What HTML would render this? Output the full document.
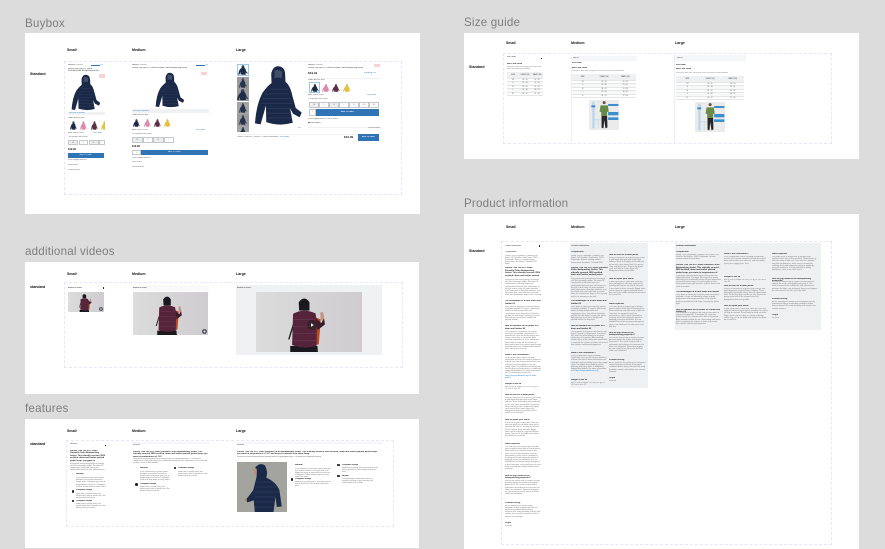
<!DOCTYPE html>
<html lang="en"><head><meta charset="utf-8"><title>Product component overview</title>
<style>
html,body{margin:0;padding:0}
body{width:885px;height:549px;background:#dcdcdc;position:relative;overflow:hidden;font-family:"Liberation Sans",sans-serif}
.a,.p,.l,.c,.s,.t,.h,.x,.d,.b{position:absolute}
.p{background:#fff}
.l{font-size:11.6px;line-height:14px;color:#7e7e7e;letter-spacing:.2px;white-space:nowrap}
.c{font-size:3.6px;line-height:5px;font-weight:700;color:#111;white-space:nowrap}
.d{border:.6px dashed #e9e5fc;box-sizing:border-box}
.t{font-size:1.9px;line-height:2.2px;color:#777;overflow:hidden;margin:0}
.h{font-size:2.1px;line-height:2.5px;color:#222;font-weight:700;overflow:hidden;margin:0}
.x{font-size:1.9px;line-height:3px;color:#666;white-space:nowrap;overflow:hidden}
.lnk{color:#2f86c9}
.b{background:#2f74b5}
.g{background:#f0f1f3}
svg{position:absolute;display:block}
table{position:absolute;border-collapse:collapse;table-layout:fixed;font-size:1.7px;color:#666;text-align:center}
td,th{padding:0;border-bottom:.3px solid #e5e5e5;font-weight:400}
th{background:#eef0f2;color:#333}
tr:nth-child(odd) td{background:#f7f8f8}
.bx{position:absolute;box-sizing:border-box;border:.5px solid #c4c7cb;font-size:1.7px;line-height:5px;text-align:center;color:#777}
.gb{background:#eceef0}
</style></head><body>
<svg width="0" height="0" style="position:absolute">
<defs>
<symbol id="j" viewBox="88 100 148 190" preserveAspectRatio="none">
<path fill="currentColor" d="M140 127Q145 103 162 104Q182 106 182 130L183 152Q197 163 204 196L214 234L232 248L226 263L206 252L197 235L205 280Q165 292 125 278L124 226L108 285L91 282Q95 222 114 186Q128 166 141 156Z"/>
<path fill="none" stroke="#fff" stroke-opacity=".14" stroke-width="1.5" d="M118 190H195M114 205H199M110 220H203M124 235H200M124 250H204M124 265H205M138 175H190"/>
<path fill="#8e97ad" fill-opacity=".35" d="M150 118Q162 112 173 120L172 142Q160 136 150 142Z"/>
</symbol>
<symbol id="v" viewBox="399 156 226 129" preserveAspectRatio="none">
<defs><linearGradient id="vg" x1="0" x2="1"><stop offset="0" stop-color="#dcdcdc"/><stop offset="1" stop-color="#cfcccf"/></linearGradient></defs>
<rect x="399" y="156" width="226" height="129" fill="url(#vg)"/>
<path fill="#b84a22" d="M525 210L537 215L533 268L522 272Z"/>
<path fill="#1a1a1e" d="M490 178Q502 162 513 178L513 196L491 196ZM472 272L530 272L531 285L472 285Z"/>
<path fill="none" stroke="#222" stroke-width="3" d="M479 225L469 258"/>
<path fill="#55233a" d="M478 203Q500 190 526 202L529 222L528 272Q502 280 476 270Z"/>
<path fill="none" stroke="#74405a" stroke-width="1" d="M478 215H528M477 230H528M477 245H528M477 260H528"/>
<path fill="#3d1c2a" d="M527 212L538 223L544 212L546 226L530 238Z"/>
<path fill="#c09384" d="M536 200l6 -1l3 15l-8 3z"/>
</symbol>
<symbol id="m" viewBox="386 270 91 90" preserveAspectRatio="none">
<rect x="386" y="270" width="91" height="90" fill="#ebebeb"/>
<rect x="396" y="275" width="7" height="80" fill="#b9d6ec"/><rect x="393" y="286" width="12" height="6" fill="#3d8fcb"/>
<rect x="400" y="328" width="22" height="3" fill="#bfd9ec"/><rect x="412" y="330" width="4" height="24" fill="#cfe3f1"/>
<rect x="444" y="282" width="31" height="6" fill="#3d8fcb"/><rect x="444" y="306" width="31" height="10" fill="#3d8fcb"/><rect x="444" y="322" width="31" height="8" fill="#3d8fcb"/>
<circle cx="432" cy="278" r="4.5" fill="#6d4c3a"/>
<path fill="#668a4a" d="M421 286L443 286L446 305L441 306L441 318L423 318L423 306L418 305Z"/>
<path fill="#26272a" d="M424 318L441 318L442 352L436 355L432 330L430 355L424 353Z"/>
</symbol>
</defs></svg>

<!-- Titles -->
<div class="l" style="left:25px;top:17px">Buybox</div>
<div class="l" style="left:25px;top:245px">additional videos</div>
<div class="l" style="left:25px;top:402px">features</div>
<div class="l" style="left:464px;top:16px">Size guide</div>
<div class="l" style="left:464px;top:197px">Product information</div>

<!-- Panels -->
<div class="p" style="left:25px;top:33px;width:395px;height:181px"></div>
<div class="p" style="left:25px;top:262px;width:394px;height:132px"></div>
<div class="p" style="left:25px;top:419px;width:394px;height:129px"></div>
<div class="p" style="left:464px;top:33px;width:395px;height:126px"></div>
<div class="p" style="left:464px;top:214px;width:395px;height:335px"></div>

<!-- BUYBOX -->
<div class="c" style="left:67px;top:48px">Small</div><div class="c" style="left:132px;top:48px">Medium</div><div class="c" style="left:236px;top:48px">Large</div>
<div class="c" style="left:30px;top:72px">Standard</div>
<div class="d" style="left:64px;top:61px;width:338px;height:134px"></div>

<!-- buybox small -->
<div class="x" style="left:68px;top:64px;width:20px"><b>WEDZE</b> | Forclaz</div>
<div class="a" style="left:91px;top:64.8px;width:9px;height:1.2px;background:#2f74b5"></div><div class="x lnk" style="left:100px;top:64px">120</div>
<p class="t" style="left:68px;top:67.5px;width:32px;height:5px;color:#333;line-height:2.4px">Forclaz Trek 100 DOT Down Packable Puffer Backpacking Jacket</p>
<div class="a" style="left:99px;top:74px;width:5.5px;height:3.6px;background:#f7d3d6"></div>
<svg style="left:71px;top:74px;color:#1b2948" width="30" height="37"><use href="#j" width="30" height="37"/></svg>
<div class="a g" style="left:68px;top:112px;width:37px;height:3px"></div><div class="x lnk" style="left:69px;top:112px">360 view of product</div>
<div class="x" style="left:68px;top:116.5px"><b>Color:</b> Asphalt Blue</div>
<svg style="left:70px;top:121px;color:#1b2948" width="7" height="9"><use href="#j" width="7" height="9"/></svg>
<svg style="left:80px;top:121px;color:#dd88ad" width="7" height="9"><use href="#j" width="7" height="9"/></svg>
<svg style="left:91px;top:121px;color:#5a2c40" width="7" height="9"><use href="#j" width="7" height="9"/></svg>
<svg style="left:101px;top:121px;color:#e1c23f" width="4" height="9"><use href="#j" width="7" height="9"/></svg>
<div class="x" style="left:68px;top:131.5px"><b>Size:</b> Select a size</div><div class="x lnk" style="left:93px;top:131.5px">Size Guide</div>
<div class="x" style="left:68px;top:135.5px">This product runs small</div>
<div class="bx gb" style="left:68px;top:140px;width:10px;height:5px">XS</div><div class="bx" style="left:78.5px;top:140px;width:9.5px;height:5px">S</div><div class="bx gb" style="left:88.5px;top:140px;width:10px;height:5px">M</div><div class="bx" style="left:99px;top:140px;width:6px;height:5px">L</div>
<div class="x" style="left:68px;top:147.5px;font-weight:700;font-size:2.6px;color:#222">$19.99</div>
<div class="b" style="left:68px;top:153px;width:36px;height:5px"></div><div class="x" style="left:68px;top:154px;width:36px;text-align:center;color:#fff">ADD TO CART</div>
<div class="x" style="left:68px;top:159px">Free shipping over $35</div><div class="x" style="left:68px;top:163.5px">Free returns</div><div class="x" style="left:68px;top:168.5px">Share product</div>

<!-- buybox medium -->
<div class="x" style="left:132px;top:64px"><b>WEDZE</b> | Forclaz</div>
<div class="a" style="left:196px;top:64.8px;width:9px;height:1.2px;background:#2f74b5"></div><div class="x lnk" style="left:205px;top:64px">120</div>
<div class="x" style="left:132px;top:67px;color:#333">Forclaz Trek 100 DOT Down Packable Puffer Backpacking Jacket</div>
<div class="a" style="left:201px;top:72px;width:6px;height:3.4px;background:#f7d3d6"></div>
<svg style="left:155px;top:72px;color:#1b2948" width="30" height="36"><use href="#j" width="30" height="36"/></svg>
<div class="a g" style="left:132px;top:109px;width:77px;height:4px"></div><div class="x lnk" style="left:133px;top:109.5px">360 view of product</div>
<div class="x" style="left:132px;top:113.5px"><b>Color:</b> Asphalt Blue</div>
<svg style="left:133px;top:119px;color:#1b2948" width="7" height="8"><use href="#j" width="7" height="8"/></svg>
<svg style="left:144px;top:119px;color:#dd88ad" width="7" height="8"><use href="#j" width="7" height="8"/></svg>
<svg style="left:154px;top:119px;color:#5a2c40" width="7" height="8"><use href="#j" width="7" height="8"/></svg>
<svg style="left:164px;top:119px;color:#e1c23f" width="7" height="8"><use href="#j" width="7" height="8"/></svg>
<div class="x" style="left:132px;top:128.5px"><b>Size:</b> Select a size</div><div class="x lnk" style="left:196px;top:128.5px">Size Guide</div>
<div class="x" style="left:132px;top:132.5px">This product runs small</div>
<div class="bx gb" style="left:132px;top:137px;width:10.5px;height:6px">XS</div><div class="bx" style="left:142.5px;top:137px;width:10.5px;height:6px">S</div><div class="bx gb" style="left:153px;top:137px;width:10.5px;height:6px">M</div><div class="bx" style="left:163.5px;top:137px;width:10.5px;height:6px">L</div>
<div class="x" style="left:132px;top:144.5px;font-weight:700;font-size:2.6px;color:#222">$19.99</div>
<div class="bx" style="left:132px;top:150px;width:9px;height:5px">1</div>
<div class="b" style="left:141px;top:150px;width:67px;height:5px"></div><div class="x" style="left:141px;top:151px;width:67px;text-align:center;color:#fff">ADD TO CART</div>
<div class="x" style="left:132px;top:156.5px">Free shipping over $35</div><div class="x" style="left:132px;top:161px">Free returns</div><div class="x" style="left:132px;top:165.5px">Share product</div>

<!-- buybox large -->
<div class="a" style="left:237px;top:64px;width:11.5px;height:12px;box-sizing:border-box;border:.6px solid #9cc8e8"></div>
<svg style="left:238px;top:65px;color:#1b2948" width="10" height="10"><use href="#j" width="10" height="10"/></svg>
<div class="a" style="left:237px;top:77px;width:11.5px;height:11.5px;background:#9b9b9b"></div>
<svg style="left:239px;top:78px;color:#26324d" width="8" height="10"><use href="#j" width="8" height="10"/></svg>
<div class="a" style="left:237px;top:89px;width:11.5px;height:11.5px;background:#9b9b9b"></div>
<svg style="left:237px;top:89px;color:#1d2a46" width="11.5" height="11.5"><use href="#j" width="11.5" height="11.5"/></svg>
<div class="a" style="left:237px;top:102px;width:11.5px;height:11.5px;background:#a5a5a5"></div>
<svg style="left:239px;top:103px;color:#26324d" width="8" height="10"><use href="#j" width="8" height="10"/></svg>
<div class="a" style="left:237px;top:114px;width:11.5px;height:11.5px;background:#9b9b9b"></div>
<svg style="left:239px;top:115px;color:#26324d" width="8" height="10"><use href="#j" width="8" height="10"/></svg>
<div class="a" style="left:237px;top:126px;width:11.5px;height:6px;background:#a5a5a5"></div>
<svg style="left:239px;top:127px;color:#26324d" width="8" height="5"><use href="#j" width="8" height="10"/></svg>
<svg style="left:254px;top:65px;color:#1b2948" width="49" height="61"><use href="#j" width="49" height="61"/></svg>
<div class="x" style="left:298px;top:127px">1/6</div>
<div class="x" style="left:308px;top:63.5px"><b>WEDZE</b> | Forclaz</div>
<div class="a" style="left:374px;top:64px;width:6px;height:3px;background:#f7d3d6"></div>
<div class="x" style="left:308px;top:67px;color:#333">Forclaz Trek 100 DOT Down Packable Puffer Backpacking Jacket</div>
<div class="x" style="left:308px;top:71.5px;font-weight:700;font-size:3.1px;color:#222">$19.99</div>
<div class="x lnk" style="left:364px;top:72px">★★★★★ 120</div>
<div class="a g" style="left:308px;top:78px;width:72px;height:.5px"></div>
<div class="x" style="left:308px;top:78.5px"><b>Color:</b> Asphalt Blue</div>
<div class="a" style="left:309px;top:82px;width:11px;height:11px;box-sizing:border-box;border:.6px solid #9cc8e8"></div>
<svg style="left:310.500px;top:83.500px;color:#1b2948" width="8" height="8"><use href="#j" width="8" height="8"/></svg>
<svg style="left:321.500px;top:83.500px;color:#dd88ad" width="8" height="8"><use href="#j" width="8" height="8"/></svg>
<svg style="left:332px;top:83.500px;color:#5a2c40" width="8" height="8"><use href="#j" width="8" height="8"/></svg>
<svg style="left:343px;top:83.500px;color:#e1c23f" width="8" height="8"><use href="#j" width="8" height="8"/></svg>
<div class="x" style="left:308px;top:94px"><b>Size:</b> Select a size</div><div class="x lnk" style="left:367px;top:94px">Size Guide</div>
<div class="x" style="left:308px;top:98px">This product runs small</div>
<div class="bx gb" style="left:309px;top:102px;width:10px;height:6px">XS</div><div class="bx" style="left:319px;top:102px;width:10px;height:6px">S</div><div class="bx gb" style="left:329px;top:102px;width:10px;height:6px">M</div><div class="bx" style="left:339px;top:102px;width:10px;height:6px">L</div><div class="bx" style="left:349px;top:102px;width:10px;height:6px">XL</div><div class="bx" style="left:359px;top:102px;width:10px;height:6px">2XL</div><div class="bx" style="left:369px;top:102px;width:10px;height:6px">3XL</div>
<div class="bx" style="left:309px;top:109px;width:6.5px;height:7px">1</div>
<div class="b" style="left:316px;top:109px;width:63px;height:7px"></div><div class="x" style="left:316px;top:111px;width:63px;text-align:center;color:#fff;font-weight:700">ADD TO CART</div>
<div class="x" style="left:308px;top:117.5px">Free shipping over $35 on all orders</div>
<div class="x" style="left:308px;top:121.5px;color:#333">▣ Free returns</div>
<div class="a g" style="left:308px;top:126.5px;width:72px;height:.5px"></div>
<div class="x" style="left:368px;top:127px">Share product</div>
<div class="a g" style="left:237px;top:134px;width:143px;height:.6px"></div>
<div class="x" style="left:237px;top:136px">Details &nbsp; Features &nbsp; Reviews &nbsp; Product information &nbsp; <span class="lnk">Size guide</span></div>
<div class="x" style="left:344px;top:136px;font-weight:700;font-size:3px;color:#222">$19.99</div>
<div class="b" style="left:358px;top:134px;width:21px;height:7px"></div><div class="x" style="left:358px;top:136px;width:21px;text-align:center;color:#fff;font-weight:700">ADD TO CART</div>

<!-- VIDEOS -->
<div class="c" style="left:67px;top:272px">Small</div><div class="c" style="left:132px;top:272px">Medium</div><div class="c" style="left:236px;top:272px">Large</div>
<div class="c" style="left:30px;top:285px">standard</div>
<div class="d" style="left:64px;top:282px;width:339px;height:86px"></div>
<div class="x" style="left:68px;top:286.500px;color:#333">Additional videos</div>
<div class="a" style="left:102.500px;top:287px;width:1px;height:1.500px;background:#333"></div>
<svg style="left:68px;top:292px" width="36" height="20"><use href="#v" width="36" height="20"/></svg>
<svg style="left:99px;top:307px" width="4" height="4"><circle cx="2" cy="2" r="1.9" fill="#3e4450"/><circle cx="2" cy="2" r=".9" fill="#ddd"/></svg>
<div class="a" style="left:132px;top:285px;width:77px;height:6px;background:#fafafb"></div>
<div class="x" style="left:133px;top:286.500px;color:#333">Additional videos</div>
<svg style="left:133px;top:292px" width="75" height="43"><use href="#v" width="75" height="43"/></svg>
<svg style="left:201.500px;top:328.500px" width="5" height="5"><circle cx="2.500" cy="2.500" r="2.400" fill="#3e4450"/><circle cx="2.500" cy="2.500" r="1.100" fill="#ddd"/></svg>
<div class="a g" style="left:236px;top:285px;width:146px;height:70px"></div>
<div class="x" style="left:237px;top:286.500px;color:#333">Additional videos</div>
<svg style="left:256px;top:292px" width="106" height="60"><use href="#v" width="106" height="60"/></svg>
<svg style="left:307px;top:320px" width="10" height="10"><circle cx="5" cy="5" r="5" fill="#2b2428" fill-opacity=".75"/><path d="M4 3.300L6.800 5L4 6.700Z" fill="#fff"/></svg>

<!-- FEATURES -->
<div class="c" style="left:67px;top:429px">Small</div><div class="c" style="left:132px;top:429px">Medium</div><div class="c" style="left:236px;top:429px">Large</div>
<div class="c" style="left:30px;top:442px">standard</div>
<div class="d" style="left:66px;top:440px;width:328px;height:87px"></div>
<div class="x" style="left:70px;top:443px;color:#333">Features</div><div class="a" style="left:104.500px;top:444.500px;width:1px;height:1px;background:#222"></div>
<p class="h" style="left:70px;top:449.500px;width:35px;height:12px">Forclaz Trek 100 DOT Down Packable Puffer Backpacking Jacket. This ethically sourced, RDS certified, down and feather packed jacket keeps you warm in temperatures of -5°C.</p>
<p class="t" style="left:70px;top:462.500px;width:36px;height:7px">Stay warm while backpacking or trekking with this lightweight puffer. The down fill compresses easily and keeps you comfortable during all your adventures on the trail and at camp.</p>
<div class="x" style="left:72px;top:473px;font-size:3px;color:#888">⁝</div><p class="h" style="left:76px;top:473px;width:28px;height:3px">Warmth</p>
<p class="t" style="left:76px;top:477px;width:30px;height:10px">RDS certified 800 fill power down provides an excellent warmth to weight ratio, and keeps you cozy in temperatures as low as -5 degrees Celsius during stops at camp and in the wind.</p>
<div class="a" style="left:71.500px;top:490px;width:2.500px;height:2.500px;border-radius:50%;background:#222"></div><p class="h" style="left:76px;top:489px;width:28px;height:3px">Compact design</p>
<p class="t" style="left:76px;top:492.500px;width:30px;height:5px">Made with a ripstop shell, this jacket packs into its pocket so it fits easily inside your pack.</p>
<div class="a" style="left:71.500px;top:500px;width:2.500px;height:2px;background:#444"></div><p class="h" style="left:76px;top:499.500px;width:28px;height:3px">Compact design</p>
<p class="t" style="left:76px;top:503px;width:30px;height:5px">Made with a ripstop shell, this jacket packs into its pocket so it fits easily inside your pack.</p>

<div class="a" style="left:132px;top:441.500px;width:78px;height:2.500px;background:#f5f6f7"></div>
<div class="x" style="left:133px;top:444px;color:#333">Features</div>
<p class="h" style="left:133px;top:450.500px;width:75px;height:6px">Forclaz Trek 100 DOT Down Packable Puffer Backpacking Jacket. This ethically sourced, RDS certified, down and feather packed jacket keeps you warm in temperatures of -5°C.</p>
<p class="t" style="left:133px;top:458px;width:75px;height:4.500px">Stay warm while backpacking or trekking with this lightweight puffer. The down fill compresses easily and keeps you comfortable during all your adventures on the trail and at camp, even at high altitude.</p>
<div class="x" style="left:135.500px;top:466.500px;font-size:3px;color:#888">⁝</div><p class="h" style="left:140px;top:466.500px;width:28px;height:3px">Warmth</p>
<p class="t" style="left:140px;top:470.500px;width:30px;height:10px">RDS certified 800 fill power down provides an excellent warmth to weight ratio, and keeps you cozy in temperatures as low as -5 degrees Celsius during stops at camp and in the wind.</p>
<div class="a" style="left:135px;top:483px;width:2.500px;height:2.500px;border-radius:50%;background:#222"></div><p class="h" style="left:140px;top:482.500px;width:28px;height:3px">Compact design</p>
<p class="t" style="left:140px;top:486px;width:30px;height:5px">Made with a ripstop shell, this jacket packs into its pocket so it fits easily inside your pack.</p>
<div class="a" style="left:173.500px;top:467px;width:2.500px;height:2px;background:#444"></div><p class="h" style="left:178px;top:466.500px;width:28px;height:3px">Compact design</p>
<p class="t" style="left:178px;top:470.500px;width:30px;height:5px">Made with a ripstop shell, this jacket packs into its pocket so it fits easily inside your pack.</p>

<div class="a" style="left:236px;top:441.500px;width:146px;height:2.500px;background:#f5f6f7"></div>
<div class="x" style="left:237px;top:444px;color:#333">Features</div>
<p class="h" style="left:237px;top:450.500px;width:144px;height:4px">Forclaz Trek 100 DOT Down Packable Puffer Backpacking Jacket. This ethically sourced, RDS certified, down and feather packed jacket keeps you warm in temperatures of -5°C and keeps its warmth even when damp.</p>
<div class="x" style="left:237px;top:456px;width:96px">Stay warm while backpacking or trekking with this lightweight puffer. The down fill compresses easily.</div>
<svg style="left:237px;top:462px" width="50" height="50" viewBox="711 185 152 150" preserveAspectRatio="none">
<rect x="711" y="185" width="152" height="150" fill="#a4a49f"/>
<path fill="#b9917c" d="M760 205L772 205L772 226L762 224ZM733 296L743 292L745 304L735 306Z"/>
<path fill="#1b2948" d="M766 203Q778 185 796 195Q806 215 800 232Q830 245 840 270L847 318L832 320L828 290L822 335L765 335L762 300L742 306L740 296L760 270L770 232Q772 220 771 206Z"/>
<path fill="none" stroke="#fff" stroke-opacity=".12" stroke-width="1.5" d="M770 245H825M764 260H835M762 275H838M764 290H830M764 305H826M764 320H824"/>
</svg>
<div class="x" style="left:290.500px;top:463px;font-size:3px;color:#888">⁝</div><p class="h" style="left:295px;top:463.500px;width:28px;height:3px">Warmth</p>
<p class="t" style="left:295px;top:467.500px;width:37px;height:9px">RDS certified 800 fill power down provides an excellent warmth to weight ratio, and keeps you cozy in temperatures as low as -5 degrees Celsius during stops at camp and in the wind.</p>
<div class="a" style="left:290.500px;top:478px;width:2.500px;height:2.500px;border-radius:50%;background:#222"></div><p class="h" style="left:295px;top:477.500px;width:28px;height:3px">Compact design</p>
<p class="t" style="left:295px;top:481px;width:37px;height:4.500px">Made with a ripstop shell, this jacket packs into its pocket so it fits easily inside your pack.</p>
<div class="a" style="left:337px;top:464px;width:2.500px;height:2px;background:#444"></div><p class="h" style="left:342px;top:463.500px;width:28px;height:3px">Compact design</p>
<p class="t" style="left:342px;top:467px;width:37px;height:4.500px">Made with a ripstop shell, this jacket packs into its pocket so it fits easily inside your pack.</p>
<div class="a" style="left:337px;top:475px;width:2.500px;height:2px;background:#444"></div><p class="h" style="left:342px;top:474.500px;width:28px;height:3px">Breath</p>
<p class="t" style="left:342px;top:478px;width:37px;height:4.500px">The lightweight, breathable shell lets moisture escape so you stay dry and comfortable on the climb.</p>

<!-- SIZE GUIDE -->
<div class="c" style="left:506px;top:41px">Small</div><div class="c" style="left:571px;top:41px">Medium</div><div class="c" style="left:675px;top:41px">Large</div>
<div class="c" style="left:469px;top:65px">Standard</div>
<div class="d" style="left:503px;top:53px;width:329px;height:91px"></div>
<div class="a" style="left:571px;top:55px;width:.5px;height:89px;background:#f0eefb"></div>
<div class="a" style="left:674px;top:55px;width:.5px;height:89px;background:#ecebf8"></div>
<div class="x" style="left:507px;top:56px;color:#333">Size Guide</div><div class="a" style="left:541px;top:57.500px;width:1px;height:1px;background:#222"></div>
<div class="x" style="left:507px;top:62.500px;color:#111;font-weight:700">Men's Size Guide</div>
<p class="t" style="left:507px;top:66px;width:36px;height:5.500px;color:#888">Find your ideal size using your chest and waist measurements below.</p>
<table style="left:507px;top:72px;width:36px;height:24px"><tr style="height:6px"><th>SIZE</th><th>CHEST (IN)</th><th>WAIST (IN)</th></tr><tr><td>XS</td><td>33 - 35</td><td>26 - 28</td></tr><tr><td>S</td><td>35 - 38</td><td>29 - 31</td></tr><tr><td>M</td><td>38 - 41</td><td>31 - 34</td></tr><tr><td>L</td><td>41 - 44</td><td>34 - 37</td></tr><tr><td>XL</td><td>44 - 47</td><td>37 - 40</td></tr></table>

<div class="a" style="left:571px;top:56px;width:66px;height:5px;background:#f5f6f7"></div>
<div class="x" style="left:573px;top:57px">&#9664; Back</div>
<div class="x" style="left:572px;top:62px;color:#111;font-weight:700">Size Guide</div>
<div class="x" style="left:572px;top:66.500px;color:#111;font-weight:700">Men's Size Guide</div>
<div class="x" style="left:572px;top:70px;color:#888">Find your ideal size using your chest and waist measurements</div>
<table style="left:572px;top:74px;width:64px;height:24px"><tr style="height:6px"><th>SIZE</th><th>CHEST (IN)</th><th>WAIST (IN)</th></tr><tr><td>XS</td><td>33 - 35</td><td>26 - 28</td></tr><tr><td>S</td><td>35 - 38</td><td>29 - 31</td></tr><tr><td>M</td><td>38 - 41</td><td>31 - 34</td></tr><tr><td>L</td><td>41 - 44</td><td>34 - 37</td></tr><tr><td>XL</td><td>44 - 47</td><td>37 - 40</td></tr></table>
<svg style="left:589px;top:100px" width="30" height="30"><use href="#m" width="30" height="30"/></svg>

<div class="a" style="left:675px;top:55px;width:71px;height:6px;background:#f5f6f7"></div>
<div class="x" style="left:677px;top:56.500px">&#9664; Back</div>
<div class="x" style="left:676px;top:63.500px;color:#111;font-weight:700">Size Guide</div>
<div class="x" style="left:676px;top:68px;color:#111;font-weight:700">Men's Size Guide</div>
<div class="x" style="left:676px;top:72px;color:#888">Find your ideal size using your chest and waist measurements</div>
<table style="left:676px;top:76px;width:68px;height:24px"><tr style="height:6px"><th>SIZE</th><th>CHEST (IN)</th><th>WAIST (IN)</th></tr><tr><td>XS</td><td>33 - 35</td><td>26 - 28</td></tr><tr><td>S</td><td>35 - 38</td><td>29 - 31</td></tr><tr><td>M</td><td>38 - 41</td><td>31 - 34</td></tr><tr><td>L</td><td>41 - 44</td><td>34 - 37</td></tr><tr><td>XL</td><td>44 - 47</td><td>37 - 40</td></tr></table>
<svg style="left:695px;top:102px" width="30" height="30"><use href="#m" width="30" height="30"/></svg>

<!-- PRODUCT INFORMATION -->
<div class="c" style="left:506px;top:225px">Small</div><div class="c" style="left:571px;top:225px">Medium</div><div class="c" style="left:675px;top:225px">Large</div>
<div class="c" style="left:469px;top:249px">Standard</div>
<div class="d" style="left:501px;top:241px;width:331px;height:304px"></div>

<!-- small col -->
<div class="x" style="left:505px;top:244.500px;color:#333">Product information</div><div class="a" style="left:539px;top:245px;width:.8px;height:1.500px;background:#222"></div>
<p class="h" style="left:505px;top:251px;width:35px;height:3px;font-weight:400">Composition</p>
<p class="t" style="left:505px;top:254.500px;width:36px;height:9px">Lining: 100% Polyamide. Padding: 90% Down, 10% Feather. Shell fabric: 100% Polyamide. Exterior coating without fluorocarbon treatment. Certified RDS down.</p>
<p class="h" style="left:505px;top:267px;width:36px;height:10px">Forclaz Trek 100 DOT Down Packable Puffer Backpacking Jacket. This ethically sourced, RDS certified, down and feather packed jacket keeps you warm in temperatures of -5°C.</p>
<p class="t" style="left:505px;top:279px;width:36px;height:16.500px">Stay warm while backpacking or trekking with this lightweight puffer. The down fill compresses easily and keeps you comfortable during all your adventures on the trail and at camp. Its water-repellent shell helps protect from light showers, and the elastic hem and cuffs seal in warmth when the temperature drops in the evening and in the morning on the trail.</p>
<p class="h" style="left:505px;top:300px;width:36px;height:5px">The advantages of a duck down and feather fill</p>
<p class="t" style="left:505px;top:306px;width:36px;height:13.500px">Duck down is among the warmest natural insulators available. It traps air effectively, adapts to body temperature and compresses into a tiny volume. Feathers provide loft and shape, keeping the jacket light and very warm for its weight and packed volume.</p>
<p class="h" style="left:505px;top:325px;width:36px;height:5px">How to maintain the fill power of a down and feather fill</p>
<p class="t" style="left:505px;top:330.500px;width:36px;height:20px">The fill power of a garment will reduce over time if it remains compressed. To maintain loft, store the jacket loosely on a hanger rather than in its pocket. After washing, tumble dry on a low setting with tennis balls to separate the clusters of down and restore their volume and thermal properties for years of dependable warmth and comfort on every trail.</p>
<p class="h" style="left:505px;top:353.500px;width:36px;height:3px">What is the certification?</p>
<p class="t" style="left:505px;top:357px;width:36px;height:21px">RDS (Responsible Down Standard) certification ensures the humane treatment of birds from which down and feathers are collected, and traceability across the supply chain. It prohibits force feeding and live plucking, and every batch is audited by independent bodies. For more information on this certification please visit <span class="lnk">https://responsibledown.org/ for more details</span></p>
<p class="h" style="left:505px;top:382.500px;width:36px;height:3px">Weight of the kit</p>
<p class="t" style="left:505px;top:385.500px;width:36px;height:3px">Men's size M weighs 10.9 oz (310 g), or 13.4 oz in size XL.</p>
<p class="h" style="left:505px;top:393.500px;width:36px;height:3px">How to care for a down jacket</p>
<p class="t" style="left:505px;top:397px;width:36px;height:17.500px">Wash in cold water on a gentle cycle using a mild liquid detergent and avoid fabric softener. Rinse thoroughly and tumble dry on low with clean tennis balls. Do not dry clean and do not iron. Repeat the drying cycle until all the clumps have fully disappeared from every baffle and the jacket has its loft back.</p>
<p class="h" style="left:505px;top:418.500px;width:36px;height:3px">How to repair your fabric</p>
<p class="t" style="left:505px;top:422px;width:36px;height:16.500px">If your jacket gets a small tear, clean the area and apply an adhesive repair patch, rounding the corners so they do not peel. Press firmly for thirty seconds. Bigger holes can be taken to a repair workshop where they can fix the baffle and replace lost down for a small fee.</p>
<p class="h" style="left:505px;top:442.500px;width:36px;height:3px">Water repellent</p>
<p class="t" style="left:505px;top:446px;width:36px;height:24px">The outer fabric is treated with a durable water repellent finish free of fluorocarbons. Water beads up and rolls away in light rain. Over time the treatment may lose performance, which can be restored by washing and tumble drying the jacket or applying a spray-on treatment. It is not intended for use during heavy downpours; in that case wear a rain shell over it to stay warm and fully dry in bad weather on the mountain.</p>
<p class="h" style="left:505px;top:474.500px;width:36px;height:5px">How do you measure the waterproofing properties?</p>
<p class="t" style="left:505px;top:480px;width:36px;height:17.500px">We test our fabrics with a column of water pressed against the textile until droplets penetrate it. The result is expressed in millimeters and indicates the pressure the fabric can withstand. Seams and zippers are also tested in our lab and in the field under real conditions.</p>
<p class="h" style="left:505px;top:501.500px;width:36px;height:3px">Product testing</p>
<p class="t" style="left:505px;top:504.500px;width:36px;height:13px">All our products are tested by our designers and by experienced hikers in mountain conditions before being released. We study durability, warmth and comfort over several seasons in order to improve each design.</p>
<p class="h" style="left:505px;top:521.500px;width:36px;height:3px">Origin</p>
<p class="t" style="left:505px;top:524.500px;width:36px;height:3px">Vietnam</p>

<!-- medium -->
<div class="a" style="left:570px;top:243px;width:78px;height:145px;background:#eff0f2"></div>
<p class="h" style="left:571px;top:245px;width:36px;height:3px;font-weight:400">Product information</p>
<p class="h" style="left:571px;top:251px;width:36px;height:3px">Composition</p>
<p class="t" style="left:571px;top:255px;width:37px;height:9px">Lining: 100% Polyamide. Padding: 90% Down, 10% Feather. Shell fabric: 100% Polyamide. Exterior coating without fluorocarbon treatment. Certified RDS down.</p>
<p class="h" style="left:571px;top:266.500px;width:37px;height:10px">Forclaz Trek 100 DOT Down Packable Puffer Backpacking Jacket. This ethically sourced, RDS certified, down and feather packed jacket keeps you warm in temperatures of -5°C.</p>
<p class="t" style="left:571px;top:278px;width:37px;height:20px">Stay warm while backpacking or trekking with this lightweight puffer. The down fill compresses easily and keeps you comfortable during all your adventures on the trail and at camp. Its water-repellent shell helps protect from light showers, and the elastic hem and cuffs seal in warmth when the temperature drops in the evening and in the morning on the trail.</p>
<p class="h" style="left:571px;top:300px;width:37px;height:5px">The advantages of a duck down and feather fill</p>
<p class="t" style="left:571px;top:306px;width:37px;height:15.500px">Duck down is among the warmest natural insulators available. It traps air effectively, adapts to body temperature and compresses into a tiny volume. Feathers provide loft and shape, keeping the jacket light and very warm for its weight and packed volume on long treks.</p>
<p class="h" style="left:571px;top:325px;width:37px;height:5px">How to maintain the fill power of a down and feather fill</p>
<p class="t" style="left:571px;top:330.500px;width:37px;height:18px">The fill power of a garment will reduce over time if it remains compressed. To maintain loft, store the jacket loosely on a hanger rather than in its pocket. After washing, tumble dry on a low setting with tennis balls to separate the clusters of down and restore their volume and thermal properties.</p>
<p class="h" style="left:571px;top:351.500px;width:37px;height:3px">What is the certification?</p>
<p class="t" style="left:571px;top:355px;width:37px;height:20.500px">RDS (Responsible Down Standard) certification ensures the humane treatment of birds from which down and feathers are collected, and traceability across the supply chain. It prohibits force feeding and live plucking, and every batch is audited by independent bodies. For more information visit <span class="lnk">https://responsibledown.org/</span></p>
<p class="h" style="left:571px;top:378.500px;width:37px;height:3px">Weight of the kit</p>
<p class="t" style="left:571px;top:382px;width:37px;height:4.500px">Men's size M weighs 10.9 oz (310 g), or 13.4 oz in size XL.</p>
<p class="h" style="left:609px;top:253.500px;width:37px;height:3px">How to care for a down jacket</p>
<p class="t" style="left:609px;top:257px;width:37px;height:16px">Wash in cold water on a gentle cycle using a mild liquid detergent and avoid fabric softener. Rinse thoroughly and tumble dry on low with clean tennis balls. Do not dry clean and do not iron. Repeat the drying cycle until all the clumps have fully disappeared from every baffle.</p>
<p class="h" style="left:609px;top:277.500px;width:37px;height:3px">How to repair your fabric</p>
<p class="t" style="left:609px;top:281px;width:37px;height:17.500px">If your jacket gets a small tear, clean the area and apply an adhesive repair patch, rounding the corners so they do not peel. Press firmly for thirty seconds. Bigger holes can be taken to a repair workshop where they can fix the baffle and replace lost down for a small fee.</p>
<p class="h" style="left:609px;top:302.500px;width:37px;height:3px">Water repellent</p>
<p class="t" style="left:609px;top:306px;width:37px;height:22px">The outer fabric is treated with a durable water repellent finish free of fluorocarbons. Water beads up and rolls away in light rain. Over time the treatment may lose performance, which can be restored by washing and tumble drying the jacket or applying a spray-on treatment. It is not intended for use during heavy downpours; wear a rain shell over it to stay warm and fully dry.</p>
<p class="h" style="left:609px;top:331.500px;width:37px;height:5px">How do you measure the waterproofing properties?</p>
<p class="t" style="left:609px;top:337px;width:37px;height:18px">We test our fabrics with a column of water pressed against the textile until droplets penetrate it. The result is expressed in millimeters and indicates the pressure the fabric can withstand. Seams and zippers are also tested in our lab and in the field under real conditions.</p>
<p class="h" style="left:609px;top:358.500px;width:37px;height:3px">Product testing</p>
<p class="t" style="left:609px;top:362px;width:37px;height:11px">All our products are tested by our designers and by experienced hikers in mountain conditions before being released. We study durability, warmth and comfort over several seasons.</p>
<p class="h" style="left:609px;top:376.500px;width:37px;height:3px">Origin</p>
<p class="t" style="left:609px;top:379.500px;width:37px;height:3px">Vietnam</p>

<!-- large -->
<div class="a" style="left:675px;top:243px;width:146px;height:87px;background:#eff0f2"></div>
<p class="h" style="left:676px;top:245px;width:46px;height:3px;font-weight:700">Product information</p>
<p class="h" style="left:676px;top:251px;width:46px;height:3px">Composition</p>
<p class="t" style="left:676px;top:254px;width:45px;height:4.500px">Lining: 100% Polyamide. Padding: 90% Down, 10% Feather. Shell fabric: 100% Polyamide. Exterior coating without fluorocarbon.</p>
<p class="h" style="left:676px;top:264px;width:45px;height:10px">Forclaz Trek 100 DOT Down Packable Puffer Backpacking Jacket. This ethically sourced, RDS certified, down and feather packed jacket keeps you warm in temperatures of -5°C.</p>
<p class="t" style="left:676px;top:274.500px;width:45px;height:13px">Stay warm while backpacking or trekking with this lightweight puffer. The down fill compresses easily and keeps you comfortable during all your adventures on the trail and at camp. Its water-repellent shell helps protect from light showers, and the elastic hem seals in warmth.</p>
<p class="h" style="left:676px;top:291px;width:45px;height:3px">The advantages of a duck down and feather fill</p>
<p class="t" style="left:676px;top:294px;width:45px;height:11px">Duck down is among the warmest natural insulators available. It traps air effectively, adapts to body temperature and compresses into a tiny volume. Feathers provide loft and shape, keeping the jacket light.</p>
<p class="h" style="left:676px;top:308.500px;width:46px;height:3px">How to maintain the fill power of a down and feather fill</p>
<p class="t" style="left:676px;top:312px;width:45px;height:15.500px">The fill power of a garment will reduce over time if it remains compressed. To maintain loft, store the jacket loosely on a hanger rather than in its pocket. After washing, tumble dry on a low setting with tennis balls to separate the clusters of down and restore their volume and thermal properties.</p>
<p class="h" style="left:724px;top:252.500px;width:45px;height:3px">What is the certification?</p>
<p class="t" style="left:724px;top:256px;width:45px;height:9px;">RDS (Responsible Down Standard) certification ensures the humane treatment of birds from which down and feathers are collected, and traceability across the supply chain. Visit <span class="lnk">https://responsibledown.org/</span></p>
<p class="h" style="left:724px;top:275.500px;width:45px;height:3px">Weight of the kit</p>
<p class="t" style="left:724px;top:278.500px;width:45px;height:3px">Men's size M weighs 10.9 oz (310 g), or 13.4 oz in size XL.</p>
<p class="h" style="left:724px;top:284.500px;width:45px;height:3px">How to care for a down jacket</p>
<p class="t" style="left:724px;top:287.500px;width:45px;height:13.500px">Wash in cold water on a gentle cycle using a mild liquid detergent and avoid fabric softener. Rinse thoroughly and tumble dry on low with clean tennis balls. Do not dry clean and do not iron. Repeat the drying cycle until all the clumps have fully disappeared from every baffle.</p>
<p class="h" style="left:724px;top:304.500px;width:45px;height:3px">How to repair your fabric</p>
<p class="t" style="left:724px;top:308px;width:45px;height:13px">If your jacket gets a small tear, clean the area and apply an adhesive repair patch, rounding the corners so they do not peel. Press firmly for thirty seconds. Bigger holes can be taken to a repair workshop where they can fix the baffle and replace lost down for a small fee.</p>
<p class="h" style="left:772px;top:252.500px;width:45px;height:3px">Water repellent</p>
<p class="t" style="left:772px;top:256px;width:45px;height:16px">The outer fabric is treated with a durable water repellent finish free of fluorocarbons. Water beads up and rolls away in light rain. Over time the treatment may lose performance, which can be restored by washing and tumble drying the jacket or applying a spray-on treatment. It is not intended for heavy downpours; wear a rain shell over it.</p>
<p class="h" style="left:772px;top:277.500px;width:46px;height:3px">How do you measure the waterproofing properties?</p>
<p class="t" style="left:772px;top:281px;width:45px;height:13px">We test our fabrics with a column of water pressed against the textile until droplets penetrate it. The result is expressed in millimeters and indicates the pressure the fabric can withstand. Seams and zippers are also tested in our lab and in the field.</p>
<p class="h" style="left:772px;top:297.500px;width:45px;height:3px">Product testing</p>
<p class="t" style="left:772px;top:301px;width:45px;height:9px">All our products are tested by our designers and by experienced hikers in mountain conditions before being released. We study durability and warmth over several seasons.</p>
<p class="h" style="left:772px;top:313.500px;width:45px;height:3px">Origin</p>
<p class="t" style="left:772px;top:316.500px;width:45px;height:3px">Vietnam</p>
</body></html>
